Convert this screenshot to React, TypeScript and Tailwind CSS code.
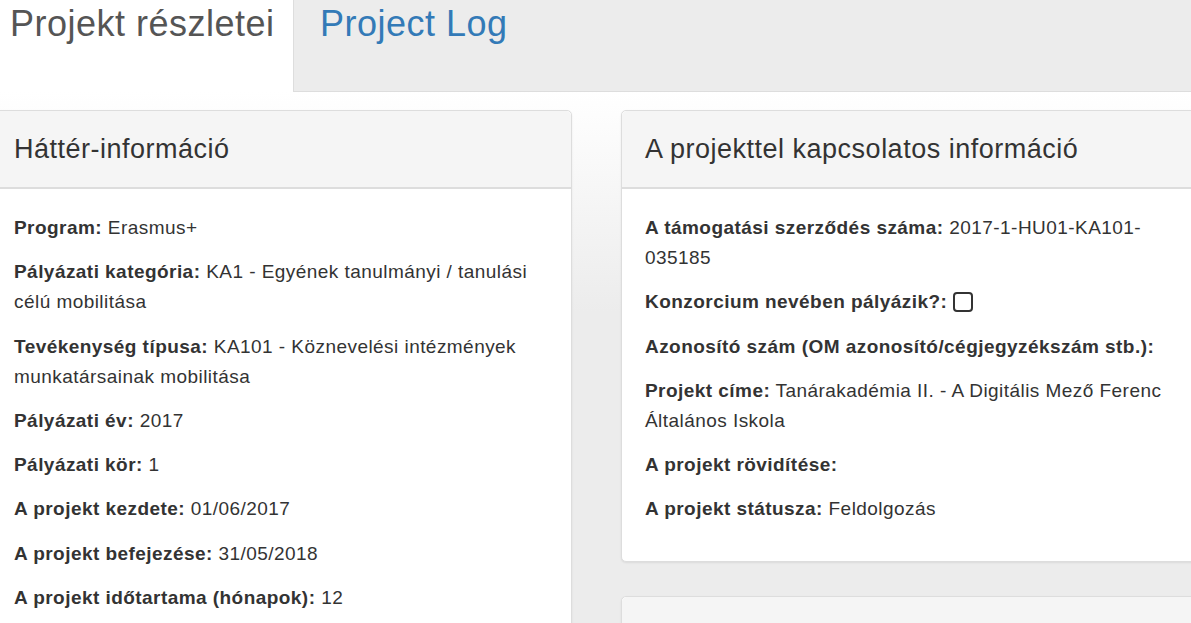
const font = { fontFamily: '"Liberation Sans", Arial, sans-serif' }

type Row = { label: string; value?: React.ReactNode }

const background: Row[] = [
  { label: "Program:", value: "Erasmus+" },
  { label: "Pályázati kategória:", value: "KA1 - Egyének tanulmányi / tanulási célú mobilitása" },
  { label: "Tevékenység típusa:", value: "KA101 - Köznevelési intézmények munkatársainak mobilitása" },
  { label: "Pályázati év:", value: "2017" },
  { label: "Pályázati kör:", value: "1" },
  { label: "A projekt kezdete:", value: "01/06/2017" },
  { label: "A projekt befejezése:", value: "31/05/2018" },
  { label: "A projekt időtartama (hónapok):", value: "12" },
]

const project: Row[] = [
  { label: "A támogatási szerződés száma:", value: "2017-1-HU01-KA101-035185" },
  {
    label: "Konzorcium nevében pályázik?:",
    value: (
      <span className="inline-block h-[20px] w-[20px] translate-y-[4px] rounded-[4px] border-2 border-[#333] bg-white" />
    ),
  },
  { label: "Azonosító szám (OM azonosító/cégjegyzékszám stb.):" },
  { label: "Projekt címe:", value: "Tanárakadémia II. - A Digitális Mező Ferenc Általános Iskola" },
  { label: "A projekt rövidítése:" },
  { label: "A projekt státusza:", value: "Feldolgozás" },
]

function Card({ title, rows }: { title: string; rows?: Row[] }) {
  return (
    <div className="w-[582px] shrink-0 self-start rounded-[5px] border border-[#ddd] bg-white shadow-[0_1px_2px_rgba(0,0,0,0.08)]">
      <div className="flex h-[78px] items-center rounded-t-[5px] border-b-2 border-[#ddd] bg-[#f5f5f5] px-[23px] text-[27px] tracking-[0.5px] text-[#333]">
        {title}
      </div>
      {rows && (
        <div className="px-[23px] pt-[24px] pb-[22px] text-[19px] leading-[30px] tracking-[0.45px] text-[#333]">
          {rows.map((r) => (
            <p key={r.label} className="mb-[14.3px]">
              <b>{r.label}</b>
              {r.value !== undefined && <> {r.value}</>}
            </p>
          ))}
        </div>
      )}
    </div>
  )
}

export default function App() {
  return (
    <div className="h-screen w-full overflow-hidden bg-[#ececec]" style={font}>
      <div className="flex h-[92px]">
        <div className="w-[293px] shrink-0 bg-white pl-[10px] pt-[3px] text-[36px] leading-[42px] tracking-[0.5px] text-[#555]">
          Projekt részletei
        </div>
        <div className="flex-1 border-b border-l border-[#ddd] bg-[#ececec] pl-[26px] pt-[3px] text-[36px] leading-[42px] tracking-[0.5px] text-[#337ab7]">
          Project Log
        </div>
      </div>
      <div className="h-full bg-[linear-gradient(to_bottom,#fff_0px,#ececec_220px)] pt-[18px]">
        <div className="-ml-[10px] flex gap-[49px]">
          <Card title="Háttér-információ" rows={background} />
          <div className="flex flex-col gap-[34px]">
            <Card title="A projekttel kapcsolatos információ" rows={project} />
            <Card title="" />
          </div>
        </div>
      </div>
    </div>
  )
}
